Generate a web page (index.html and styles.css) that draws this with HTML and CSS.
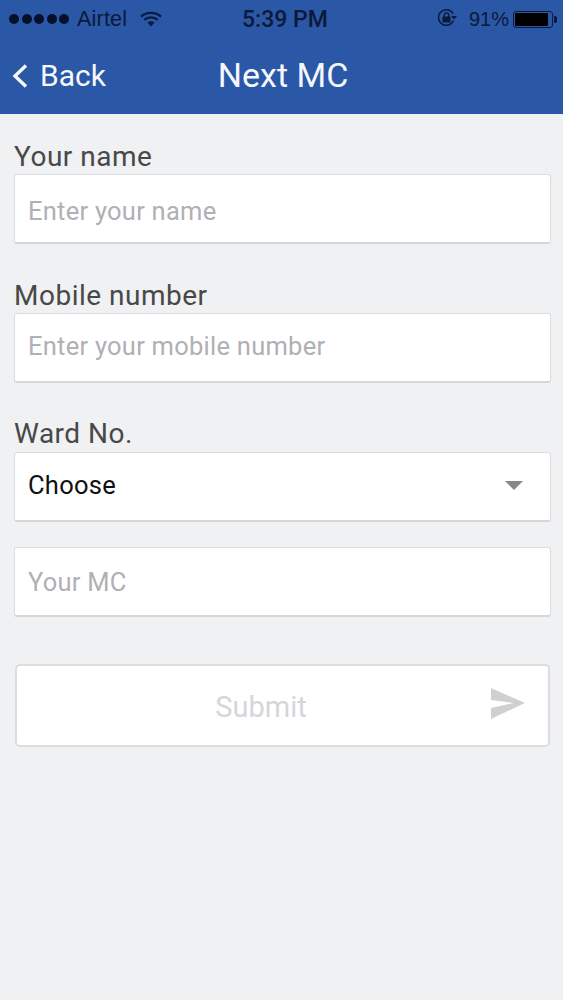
FILE: index.html
```
<!DOCTYPE html>
<html lang="en">
<head>
<meta charset="utf-8">
<title>Next MC</title>
<link rel="stylesheet" href="styles.css">
</head>
<body>
<header class="top">
  <div class="status">
    <div class="status-left">
      <span class="dots"><i></i><i></i><i></i><i></i><i></i></span>
      <span class="carrier">Airtel</span>
      <svg class="wifi" width="22" height="16" viewBox="0 0 22 16"><path d="M1 5.600C6.600.6 15.400.6 21 5.600" fill="none" stroke="#0b1a3a" stroke-width="2.200"/><path d="M4.300 8.800c3.800-3.300 9.600-3.300 13.400 0" fill="none" stroke="#0b1a3a" stroke-width="2.200"/><path d="M7.500 11.600c2-1.700 5-1.700 7 0L11 15.500z" fill="#0b1a3a"/></svg>
    </div>
    <span class="time">5:39 PM</span>
    <div class="status-right">
      <svg class="lock" width="22" height="20" viewBox="0 0 22 20"><path d="M17.500 12.500A7.800 7.800 0 1 1 17 5.500" fill="none" stroke="#0b1a3a" stroke-width="1.500"/><path d="M15 8h6l-3 3.500z" fill="#0b1a3a"/><rect x="6.500" y="8.500" width="8" height="6" rx="1" fill="#0b1a3a"/><path d="M8.300 9V7a2.200 2.200 0 0 1 4.400 0v2" fill="none" stroke="#0b1a3a" stroke-width="1.300"/></svg>
      <span class="pct">91%</span>
      <span class="battery"><b></b></span><span class="nub"></span>
    </div>
  </div>
  <nav class="nav">
    <div class="back">
      <svg width="18" height="26" viewBox="0 0 18 26"><path d="M15 2.500 4 13l11 10.500" fill="none" stroke="#f4f7fc" stroke-width="3.400"/></svg>
      <span>Back</span>
    </div>
    <h1>Next MC</h1>
  </nav>
</header>
<main class="form">
  <label class="label first">Your name</label>
  <div class="field low"><span class="ph">Enter your name</span></div>
  <label class="label mobile">Mobile number</label>
  <div class="field high"><span class="ph">Enter your mobile number</span></div>
  <label class="label second">Ward No.</label>
  <div class="field select high"><span class="val">Choose</span><span class="caret"></span></div>
  <div class="field mc"><span class="ph">Your MC</span></div>
  <div class="submit">
    <span class="submit-text">Submit</span>
    <svg class="send" width="36" height="34" viewBox="0 0 36 34"><path d="M1 1 35 16 1 32V21L24 16 1 13z" fill="#cfd0d2"/></svg>
  </div>
</main>
</body>
</html>
```
FILE: styles.css
```
* { box-sizing: border-box; }
html, body { margin: 0; padding: 0; }
body { width: 563px; height: 1000px; background: #f0f1f3; font-family: Roboto, "Liberation Sans", sans-serif; overflow: hidden; }
.top { height: 114px; background: #2a57a6; }
.status { height: 38px; display: flex; align-items: center; justify-content: space-between; padding: 0 6px 0 9px; color: #0b1a3a; position: relative; }
.status-left { display: flex; align-items: center; }
.dots { display: flex; gap: 2.500px; }
.dots i { width: 10px; height: 10px; border-radius: 50%; background: #05102a; }
.carrier { font-size: 21.500px; margin-left: 8px; letter-spacing: .2px; font-family: "Liberation Sans", sans-serif; }
.wifi { margin-left: 13px; }
.time { position: absolute; left: 242px; top: 6px; font-size: 23px; font-weight: 500; }
.status-right { display: flex; align-items: center; }
.pct { font-size: 20px; margin-left: 11px; font-family: "Liberation Sans", sans-serif; }
.lock { margin-top: -2px; }
.battery { width: 40px; height: 17px; margin-left: 4px; border: 1px solid #0b1a3a; border-radius: 3px; padding: 1px; display: block; }
.battery b { display: block; width: 91%; height: 100%; background: #000; border-radius: 1px; }
.nub { width: 3px; height: 7px; background: #0b1a3a; border-radius: 0 2px 2px 0; margin-left: 1px; }
.nav { height: 76px; position: relative; display: flex; align-items: center; justify-content: center; color: #f4f7fc; padding-bottom: 2px; }
.back { position: absolute; left: 11px; top: 20px; display: flex; align-items: center; gap: 11px; font-size: 30px; }
.nav h1 { margin: 0 0 0 3px; font-size: 34px; font-weight: 400; }
.form { padding: 0 12px 0 14px; }
.label { display: block; font-size: 28px; letter-spacing: .5px; color: #484848; line-height: 32px; }
.label.first { margin-top: 27px; margin-bottom: -1px; }
.label.mobile { margin-top: 36px; margin-bottom: -1px; }
.label.second { margin-top: 35px; }
.field { height: 70px; background: #fff; border: 1px solid #dcdcde; border-bottom: 2px solid #d6d6d8; border-radius: 3px; display: flex; align-items: center; padding: 0 13px; margin-top: 2px; font-size: 25.500px; letter-spacing: .25px; }
.low { padding-top: 4px; }
.high { padding-bottom: 3px; }
.ph { color: #b0b0b5; }
.val { color: #111; }
.select { justify-content: space-between; padding-right: 27px; }
.caret { width: 0; height: 0; border-left: 9px solid transparent; border-right: 9px solid transparent; border-top: 9px solid #888; }
.mc { margin-top: 25px; }
.submit { height: 83px; margin: 47px 1px 0 1px; padding: 2px 43px 0 0; background: #fff; border: 2px solid #dcdcde; border-radius: 5px; position: relative; display: flex; align-items: center; justify-content: center; }
.submit-text { font-size: 29px; color: #d5d6d9; }
.send { position: absolute; right: 22px; top: 21px; }
```
